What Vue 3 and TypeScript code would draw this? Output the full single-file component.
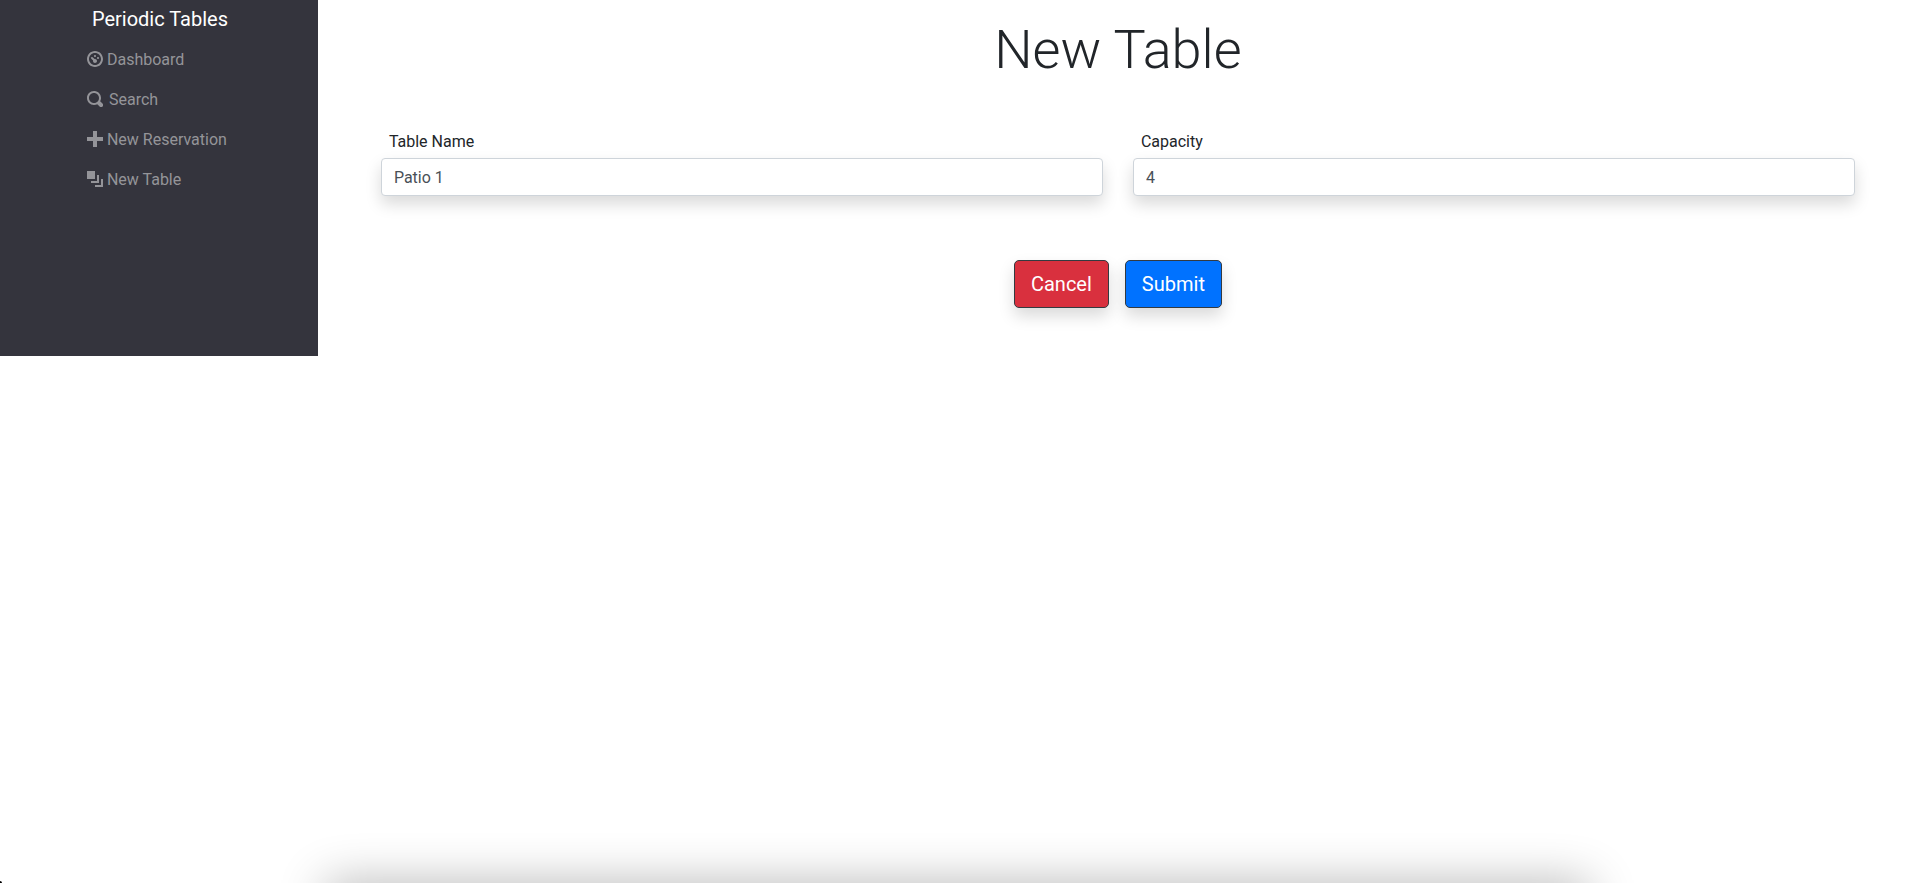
<script setup lang="ts">
import { ref } from 'vue'

interface NavItem {
  label: string
  path: string
  wide?: boolean
}

const navItems: NavItem[] = [
  {
    label: 'Dashboard',
    path: 'M4 0c-2.2 0-4 1.8-4 4s1.8 4 4 4 4-1.8 4-4-1.8-4-4-4zm0 1c1.66 0 3 1.34 3 3s-1.34 3-3 3-3-1.34-3-3 1.34-3 3-3zm0 1c-.28 0-.5.22-.5.5s.22.5.5.5.5-.22.5-.5-.22-.5-.5-.5zm-1.66 1a.5.5 0 0 0-.19.84l.91.91c-.02.08-.06.16-.06.25 0 .55.45 1 1 1s1-.45 1-1-.45-1-1-1c-.09 0-.17.04-.25.06l-.91-.91a.5.5 0 0 0-.44-.16.5.5 0 0 0-.06 0zm3.16 0c-.28 0-.5.22-.5.5s.22.5.5.5.5-.22.5-.5-.22-.5-.5-.5z',
  },
  {
    label: 'Search',
    path: 'M3.5 0c-1.93 0-3.5 1.57-3.5 3.5s1.57 3.5 3.5 3.5c.59 0 1.17-.14 1.66-.41a1 1 0 0 0 .13.13l1 1a1.02 1.02 0 1 0 1.44-1.44l-1-1a1 1 0 0 0-.16-.13c.27-.49.44-1.06.44-1.66 0-1.93-1.55-3.5-3.5-3.5zm0 1c1.39 0 2.5 1.11 2.5 2.5 0 .66-.24 1.27-.66 1.72-.01.01-.02.02-.03.03a1 1 0 0 0-.13.13c-.44.4-1.04.63-1.69.63-1.39 0-2.5-1.11-2.5-2.5s1.11-2.5 2.5-2.5z',
    wide: true,
  },
  { label: 'New Reservation', path: 'M3 0v3h-3v2h3v3h2v-3h3v-2h-3v-3h-2z' },
  { label: 'New Table', path: 'M0 0v4h4v-4h-4zm5 2v3h-3v1h4v-4h-1zm2 2v3h-3v1h4v-4h-1z' },
]

const tableName = ref('Patio 1')
const capacity = ref('4')

function reset() {
  tableName.value = ''
  capacity.value = ''
}
</script>

<template>
  <div class="layout">
    <nav class="sidebar">
      <div class="menu">
        <a class="brand" href="#">Periodic Tables</a>
        <ul class="links">
          <li v-for="item in navItems" :key="item.label">
            <a class="link" :class="{ wide: item.wide }" href="#">
              <svg class="icon" viewBox="0 0 8 8" aria-hidden="true"><path :d="item.path" /></svg>
              <span>{{ item.label }}</span>
            </a>
          </li>
        </ul>
      </div>
    </nav>
    <main class="content">
      <h1>New Table</h1>
      <form @submit.prevent>
        <div class="fields">
          <div class="field">
            <label for="table-name">Table Name</label>
            <input id="table-name" v-model="tableName" type="text" />
          </div>
          <div class="field">
            <label for="capacity">Capacity</label>
            <input id="capacity" v-model="capacity" type="text" inputmode="numeric" />
          </div>
        </div>
        <div class="actions">
          <button class="cancel" type="button" @click="reset">Cancel</button>
          <button class="submit" type="submit">Submit</button>
        </div>
      </form>
    </main>
  </div>
  <div class="edge" aria-hidden="true"></div>
  <div class="corner" aria-hidden="true"></div>
</template>

<style>
body {
  margin: 0;
  background: #fff;
}
</style>

<style scoped>
.layout,
.layout * {
  box-sizing: border-box;
}
.layout {
  display: grid;
  grid-template-columns: 16.6% 1fr;
  min-height: 356px;
  font-family: Roboto, Inter, sans-serif;
  font-size: 16px;
  line-height: 24px;
  color: #212529;
}
.sidebar {
  display: flex;
  justify-content: center;
  padding: 4px 0;
  background: #34343d;
}
.menu {
  width: 144px;
}
.brand {
  display: block;
  padding-left: 5px;
  font-size: 20px;
  line-height: 30px;
  color: #fff;
  text-decoration: none;
  white-space: nowrap;
}
.links {
  margin: 6px 0 0;
  padding: 0;
  list-style: none;
}
.link {
  display: flex;
  gap: 4px;
  padding: 8px 0;
  color: #949499;
  text-decoration: none;
  white-space: nowrap;
}
.link.wide {
  gap: 6px;
}
.icon {
  flex: none;
  width: 16px;
  height: 16px;
  margin-top: 3px;
  fill: currentColor;
}
.content {
  padding: 16px 60px 48px 63px;
}
h1 {
  margin: 0;
  font-size: 54px;
  font-weight: 300;
  line-height: 68px;
  text-align: center;
}
.fields {
  display: grid;
  grid-template-columns: 1fr 1fr;
  gap: 30px;
  margin-top: 46px;
}
.field {
  display: flex;
  flex-direction: column;
  gap: 4px;
}
label {
  padding-left: 8px;
}
input {
  width: 100%;
  height: 38px;
  padding: 6px 12px;
  border: 1px solid #ced4da;
  border-radius: 4px;
  background: #fff;
  color: #495057;
  font: inherit;
  box-shadow: 0 8px 16px rgba(0, 0, 0, 0.15);
}
.actions {
  display: flex;
  justify-content: center;
  gap: 16px;
  margin-top: 64px;
}
button {
  padding: 8px 16px;
  border: 1px solid #343a40;
  border-radius: 5px;
  color: #fff;
  font-family: inherit;
  font-size: 20px;
  line-height: 30px;
  box-shadow: 0 8px 16px rgba(0, 0, 0, 0.15);
}
.cancel {
  background: #d9303e;
}
.submit {
  background: #0072ff;
}
.edge {
  position: fixed;
  bottom: -40px;
  left: 17%;
  right: 17%;
  height: 40px;
  box-shadow: 0 0 48px rgba(0, 0, 0, 0.3);
}
.corner {
  position: fixed;
  bottom: 0;
  left: 0;
  width: 2px;
  height: 2px;
  border-top-right-radius: 2px;
  background: #000;
}
</style>
